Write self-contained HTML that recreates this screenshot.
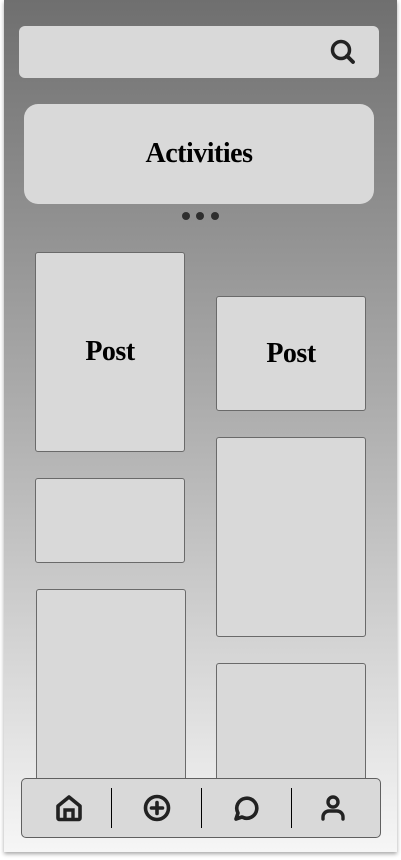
<!DOCTYPE html>
<html><head><style>
html,body{margin:0;padding:0;width:401px;height:860px;background:#fff;overflow:hidden;font-family:"Liberation Sans",sans-serif}
.frame{position:absolute;left:4px;top:0;width:393px;height:852px;background:linear-gradient(#6f6f6f,#a9a9a9 45%,#f6f6f6);box-shadow:0 2px 4px rgba(0,0,0,.35);overflow:hidden}
.box{position:absolute;background:#d9d9d9}
.post{position:absolute;background:#d9d9d9;border:1px solid #6a6a6a;border-radius:3px;box-sizing:border-box;display:flex;align-items:center;justify-content:center;font-family:"Liberation Serif",serif;font-weight:bold;font-size:28px;color:#000;letter-spacing:-0.5px}
.dot{position:absolute;top:212px;width:8px;height:8px;border-radius:50%;background:#2e2e2e}
.div{position:absolute;top:788px;width:1px;height:40px;background:#000}
</style></head><body>
<div class="frame"></div>
<div class="box" style="left:19px;top:26px;width:360px;height:52px;border-radius:6px"></div>
<svg style="position:absolute;left:329px;top:38px" width="28" height="28" viewBox="0 0 28 28"><circle cx="12" cy="12" r="8.5" fill="none" stroke="#222" stroke-width="3.5"/><path d="M18 18L24 24" stroke="#222" stroke-width="3.8" stroke-linecap="round"/></svg>
<div class="box" style="left:24px;top:104px;width:350px;height:100px;border-radius:14px;display:flex;align-items:center;justify-content:center;font-family:'Liberation Serif',serif;font-weight:bold;font-size:28px;letter-spacing:-0.5px">Activities</div>
<div class="dot" style="left:182px"></div><div class="dot" style="left:196px"></div><div class="dot" style="left:211px"></div>
<div class="post" style="left:35px;top:252px;width:150px;height:200px">Post</div>
<div class="post" style="left:35px;top:478px;width:150px;height:85px"></div>
<div class="post" style="left:36px;top:589px;width:150px;height:200px"></div>
<div class="post" style="left:216px;top:296px;width:150px;height:115px">Post</div>
<div class="post" style="left:216px;top:437px;width:150px;height:200px"></div>
<div class="post" style="left:216px;top:663px;width:150px;height:130px"></div>
<div style="position:absolute;left:21px;top:778px;width:360px;height:60px;background:#d9d9d9;border:1px solid #606060;border-radius:5px;box-sizing:border-box"></div>
<div class="div" style="left:111px"></div><div class="div" style="left:201px"></div><div class="div" style="left:291px"></div>
<svg style="position:absolute;left:55px;top:794px" width="28" height="28" viewBox="0 0 28 28"><path d="M3 12L14 3L25 12V24a1.5 1.5 0 0 1-1.5 1.5H4.5A1.5 1.5 0 0 1 3 24Z" fill="none" stroke="#222" stroke-width="3.6" stroke-linejoin="round"/><path d="M10 25V16h8v9" fill="none" stroke="#222" stroke-width="3.4"/></svg>
<svg style="position:absolute;left:143px;top:794px" width="28" height="28" viewBox="0 0 28 28"><circle cx="14" cy="14" r="11.5" fill="none" stroke="#222" stroke-width="3.6"/><path d="M14 8.5v11M8.5 14h11" stroke="#222" stroke-width="3.6" stroke-linecap="round"/></svg>
<svg style="position:absolute;left:231px;top:794px" width="28" height="28" viewBox="0 0 28 28"><path d="M5 25L7 19A10 10 0 1 1 11 23Z" fill="none" stroke="#222" stroke-width="3.6" stroke-linejoin="round"/></svg>
<svg style="position:absolute;left:319px;top:794px" width="28" height="28" viewBox="0 0 28 28"><circle cx="14" cy="8" r="5" fill="none" stroke="#222" stroke-width="3.4"/><path d="M4 25v-2a6 6 0 0 1 6-6h8a6 6 0 0 1 6 6v2" fill="none" stroke="#222" stroke-width="3.4" stroke-linecap="round"/></svg>
</body></html>
